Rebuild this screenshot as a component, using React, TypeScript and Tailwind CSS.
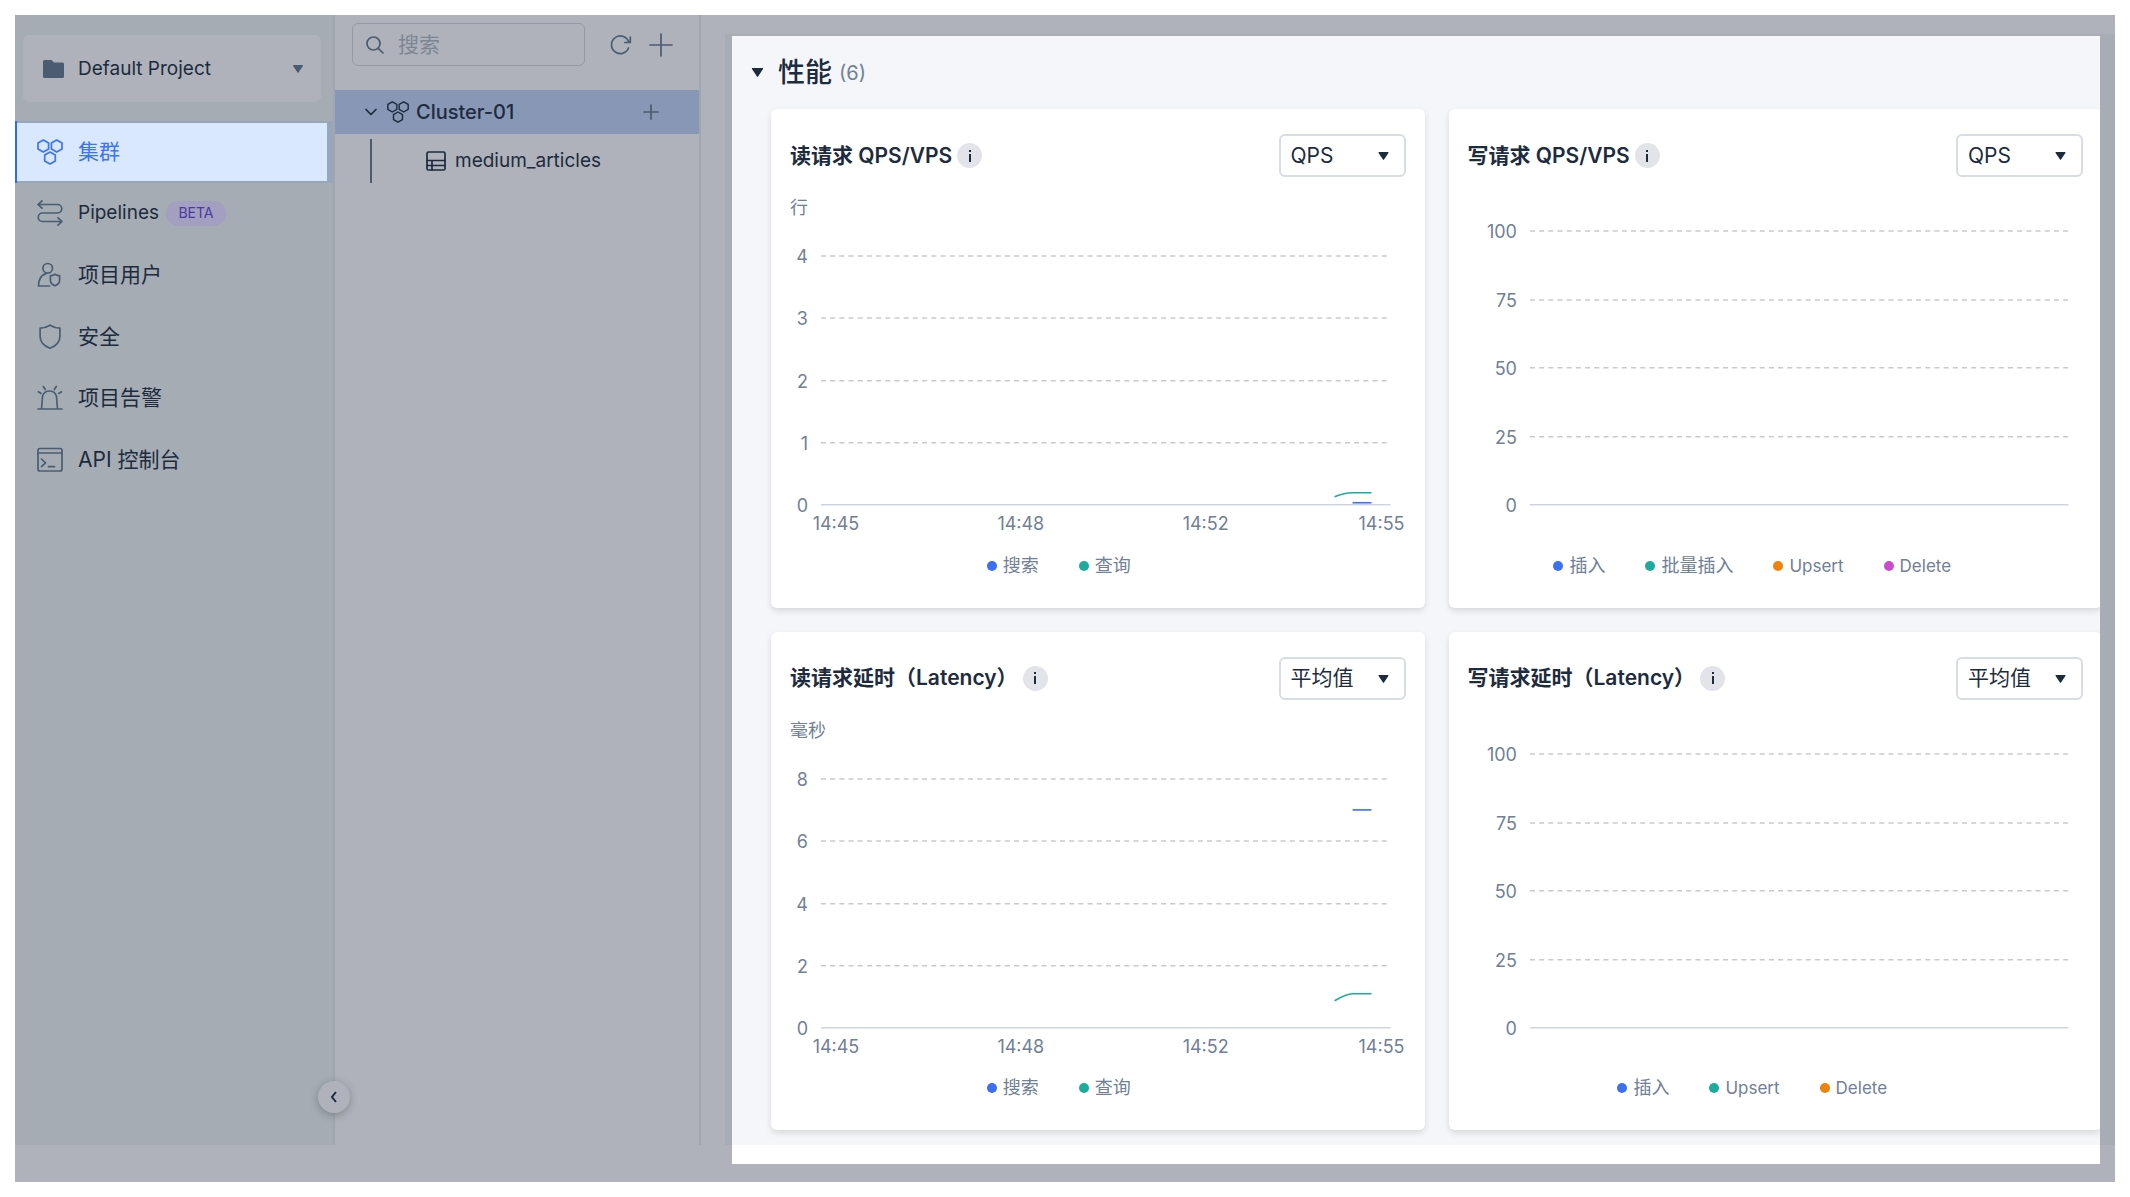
import type { ReactNode } from 'react';

type Series = { name: string; dot: string; stroke?: string; path?: string };

type Chart = {
    title: string;
    unit?: string;
    mode: string;
    ticks: string[];
    top: number;
    left: number;
    times?: string[];
    legend: string;
    series: Series[];
};

const charts: Chart[] = [
    {
        title: '读请求 QPS/VPS',
        unit: '行',
        mode: 'QPS',
        ticks: ['4', '3', '2', '1', '0'],
        top: 79,
        left: 50,
        times: ['14:45', '14:48', '14:52', '14:55'],
        legend: 'pr-[78px]',
        series: [
            { name: '搜索', dot: 'bg-[#3b6ff5]', stroke: '#3b6ff5', path: 'M582 326H601' },
            { name: '查询', dot: 'bg-[#1cac9c]', stroke: '#1cac9c', path: 'M564 320Q574 316 582 316H601' },
        ],
    },
    {
        title: '写请求 QPS/VPS',
        mode: 'QPS',
        ticks: ['100', '75', '50', '25', '0'],
        top: 54,
        left: 81,
        legend: 'pr-[46px]',
        series: [
            { name: '插入', dot: 'bg-[#3b6ff5]' },
            { name: '批量插入', dot: 'bg-[#1cac9c]' },
            { name: 'Upsert', dot: 'bg-[#f0820a]' },
            { name: 'Delete', dot: 'bg-[#cc4acc]' },
        ],
    },
    {
        title: '读请求延时（Latency）',
        unit: '毫秒',
        mode: '平均值',
        ticks: ['8', '6', '4', '2', '0'],
        top: 79,
        left: 50,
        times: ['14:45', '14:48', '14:52', '14:55'],
        legend: 'pr-[78px]',
        series: [
            { name: '搜索', dot: 'bg-[#3b6ff5]', stroke: '#3b6ff5', path: 'M582 110H601' },
            { name: '查询', dot: 'bg-[#1cac9c]', stroke: '#1cac9c', path: 'M564 301Q576 294 582 294H601' },
        ],
    },
    {
        title: '写请求延时（Latency）',
        mode: '平均值',
        ticks: ['100', '75', '50', '25', '0'],
        top: 54,
        left: 81,
        legend: 'pr-[46px]',
        series: [
            { name: '插入', dot: 'bg-[#3b6ff5]' },
            { name: 'Upsert', dot: 'bg-[#1cac9c]' },
            { name: 'Delete', dot: 'bg-[#f0820a]' },
        ],
    },
];

const timeX = [65, 250, 435, 611];
const BASELINE = 328;

const isLatin = (text: string) => /^[A-Za-z]+$/.test(text);

const Icon = ({ box, className, children }: { box: string; className: string; children: ReactNode }) => (
    <svg
        className={className}
        viewBox={box}
        fill="none"
        stroke="currentColor"
        strokeWidth="1.7"
        strokeLinecap="round"
        strokeLinejoin="round"
        aria-hidden="true"
    >
        {children}
    </svg>
);

const ClusterIcon = ({ className }: { className: string }) => (
    <Icon box="0 0 26 26" className={className}>
        <path d="M6.3 1l5.3 3.1v5.8L6.3 13 1 9.9V4.1zM19.7 1L25 4.1v5.8L19.7 13l-5.3-3.1V4.1zM13 13l5.3 3.1v5.8L13 25l-5.3-3.1v-5.8z" />
    </Icon>
);

const Caret = ({ className }: { className: string }) => (
    <svg className={className} viewBox="0 0 10 8" fill="currentColor" aria-hidden="true">
        <path d="M.6 0h8.8c.5 0 .7.5.5.9L5.5 7.6c-.2.4-.8.4-1 0L.1.9C-.1.5.1 0 .6 0z" />
    </svg>
);

const navItems: { label: string; beta?: boolean; icon: ReactNode }[] = [
    {
        label: 'Pipelines',
        beta: true,
        icon: <path d="M1 4.5h19.5a4.2 4.2 0 0 1 0 8.5H5.5a4.2 4.2 0 0 0 0 8.5H25M5 .8 1 4.5l4 3.7M21 17.8l4 3.7-4 3.7" />,
    },
    {
        label: '项目用户',
        icon: (
            <>
                <circle cx="10.7" cy="6.3" r="4.8" />
                <path d="M12.5 24H1.5C1.5 17.5 4 13 9 11.6M18 12.3c1.5 1 3 1.4 4.6 1.4v4.5c0 2.6-1.8 4.4-4.6 5.6-2.8-1.2-4.6-3-4.6-5.6v-4.5c1.6 0 3.1-.4 4.6-1.4z" />
            </>
        ),
    },
    {
        label: '安全',
        icon: <path d="M13 1.2c3 1.8 6 2.8 9.9 3v8.3c0 5.5-4.2 9.5-9.900 11.800-5.700-2.300-9.900-6.300-9.900-11.800V4.200c3.900-.2 6.900-1.200 9.900-3z" />,
    },
    {
        label: '项目告警',
        icon: <path d="M1 24h24M4.500 24l1-12.500a7.200 7.200 0 0 1 14 0l1 12.500M6.300 1.500l2 3M19.300 1.500l-2 3M1.300 6.800l2.800 1.600M24.500 6.800l-2.800 1.600" />,
    },
    {
        label: 'API 控制台',
        icon: (
            <>
                <rect x="1" y="1.5" width="24" height="22.5" rx="2" />
                <path d="M1 6h24M4.500 12l4 3.800-4 3.800M11.500 19.600h6" />
            </>
        ),
    },
];

const Sidebar = () => {
    return (
        <aside className="relative w-[320px] shrink-0 border-r-2 border-[#a0a6ae] bg-[#a5acb4] pt-5">
            <button className="mx-2 flex h-[67px] w-[298px] items-center rounded-md bg-[#afb2ba] pl-5 pr-[18px] text-left">
                <svg className="h-[18px] w-[21px] text-[#4b5c71]" viewBox="0 0 21 18" fill="currentColor" aria-hidden="true">
                    <path d="M1.5 0h7L11 2.500h8.500A1.500 1.500 0 0 1 21 4v12.500a1.500 1.500 0 0 1-1.500 1.500h-18A1.500 1.500 0 0 1 0 16.500v-15A1.500 1.500 0 0 1 1.500 0z" />
                </svg>
                <span className="ml-[14px] flex-1 text-[19px]">Default Project</span>
                <Caret className="h-2 w-[10px] text-[#4b5c71]" />
            </button>
            <nav className="mt-[19px]">
                <ul className="grid h-[370px] grid-rows-6">
                    <li className="border-l-2 border-[#2f6fe4] bg-[#96a6bd] py-[2px] pr-[6px]">
                        <a href="#clusters" className="flex h-full items-center bg-[#d9e8fe] pl-5 text-[#3b74f5]">
                            <ClusterIcon className="h-[26px] w-[26px]" />
                            <span className="ml-[15px]">集群</span>
                        </a>
                    </li>
                    {navItems.map((item) => (
                        <li key={item.label}>
                            <a href="#" className="flex h-full items-center pl-[22px]">
                                <Icon box="0 0 26 26" className="h-[26px] w-[26px] text-[#4b5c71]">
                                    {item.icon}
                                </Icon>
                                <span className={`ml-[15px] ${isLatin(item.label) ? 'text-[19px]' : ''}`}>{item.label}</span>
                                {item.beta && (
                                    <span className="ml-[7px] flex h-[25px] w-[60px] items-center justify-center rounded-full bg-[#a29fc0] text-[14px] text-[#4a3aa0]">
                                        BETA
                                    </span>
                                )}
                            </a>
                        </li>
                    ))}
                </ul>
            </nav>
            <button
                aria-label="Collapse menu"
                className="absolute -right-[17px] bottom-8 z-10 flex h-8 w-8 items-center justify-center rounded-full bg-[#afb2ba] shadow-[0_2px_8px_rgba(0,0,0,0.25)]"
            >
                <svg className="h-3 w-2" viewBox="0 0 8 12" fill="none" stroke="currentColor" strokeWidth="2" aria-hidden="true">
                    <path d="M6 1 2 6l4 5" />
                </svg>
            </button>
        </aside>
    );
};

const ClusterTree = () => {
    return (
        <section className="w-[366px] shrink-0 border-r-2 border-[#a0a6ae] pt-2">
            <div className="flex items-center pl-[17px] text-[#4b5c71]">
                <label className="flex h-[43px] w-[233px] items-center rounded-md border border-[#929aa6] pl-[13px]">
                    <Icon box="0 0 18 18" className="h-[18px] w-[18px]">
                        <circle cx="7.5" cy="7.5" r="6.5" />
                        <path d="M12.3 12.3 17 17" />
                    </Icon>
                    <input
                        type="text"
                        aria-label="搜索"
                        placeholder="搜索"
                        className="ml-[14px] w-[160px] bg-transparent outline-none placeholder:text-[#7b8694]"
                    />
                </label>
                <button aria-label="Refresh" className="ml-6">
                    <Icon box="0 0 24 22" className="h-[22px] w-6">
                        <path d="M19.8 8.5A8.800 8.800 0 1 0 19.500 14M21.300 3v5.500h-5.500" />
                    </Icon>
                </button>
                <button aria-label="Create cluster" className="ml-4">
                    <Icon box="0 0 24 24" className="h-6 w-6">
                        <path d="M12 1v22M1 12h22" />
                    </Icon>
                </button>
            </div>
            <div className="mt-6 flex h-11 items-center bg-[#8897b6] pl-[30px] pr-10 font-medium">
                <Icon box="0 0 12 8" className="h-2 w-3">
                    <path d="M1 1.5l5 5 5-5" />
                </Icon>
                <ClusterIcon className="ml-[10px] h-[22px] w-[22px]" />
                <span className="ml-[7px] flex-1 text-[20px]">Cluster-01</span>
                <button aria-label="Create collection" className="text-[#4b5c71]">
                    <Icon box="0 0 16 16" className="h-4 w-4">
                        <path d="M8 1v14M1 8h14" />
                    </Icon>
                </button>
            </div>
            <div className="ml-[35px] mt-[5px] flex h-11 items-center border-l-2 border-[#4f5b6b] pl-[54px]">
                <Icon box="0 0 20 20" className="h-5 w-5">
                    <rect x="1" y="1" width="18" height="18" rx="1.5" />
                    <path d="M1 9.5h18M1 14.5h18M6 9.5V19" />
                </Icon>
                <a href="#medium_articles" className="ml-[9px] text-[19px]">
                    medium_articles
                </a>
            </div>
        </section>
    );
};

const ChartCard = ({ chart }: { chart: Chart }) => {
    const step = (BASELINE - chart.top) / (chart.ticks.length - 1);
    return (
        <article className="rounded-md bg-white pb-7 pt-[25px] shadow-[0_3px_6px_rgba(0,0,0,0.12)]">
            <div className="flex h-[43px] items-center px-[19px]">
                <h3 className="font-semibold">{chart.title}</h3>
                <button
                    aria-label={`${chart.title} info`}
                    className="ml-[5px] flex h-[25px] w-[25px] items-center justify-center rounded-full bg-[#e2e4e9]"
                >
                    <svg className="h-3 w-1" viewBox="0 0 4 12" fill="currentColor" aria-hidden="true">
                        <path d="M1 0h2v2H1zM1 4h2v8H1z" />
                    </svg>
                </button>
                <div className="relative ml-auto">
                    <select
                        aria-label={chart.title}
                        className="h-[43px] w-[127px] appearance-none rounded-md border-2 border-[#d8dde4] bg-white pl-[10px]"
                    >
                        <option>{chart.mode}</option>
                    </select>
                    <Caret className="pointer-events-none absolute right-[17px] top-[18px] h-2 w-[11px]" />
                </div>
            </div>
            <svg className="w-full" viewBox="0 0 654 375" fontSize="18" fill="#708096">
                {chart.unit && <text x="19" y="37">{chart.unit}</text>}
                {chart.ticks.map((tick, i) => {
                    const y = Math.round(chart.top + i * step);
                    const last = i === chart.ticks.length - 1;
                    return (
                        <g key={tick}>
                            <text x={chart.left - 13} y={y + 7} textAnchor="end">{tick}</text>
                            <path
                                d={`M${chart.left} ${y}H620`}
                                stroke={last ? '#cfd5e0' : '#c8cacd'}
                                strokeWidth="1.5"
                                strokeDasharray={last ? undefined : '5 4.2'}
                            />
                        </g>
                    );
                })}
                {chart.times?.map((time, i) => (
                    <text key={time} x={timeX[i]} y="353" textAnchor="middle">{time}</text>
                ))}
                {chart.series.map((s) => s.path && (
                    <path key={s.name} d={s.path} fill="none" stroke={s.stroke} strokeWidth="1.6" />
                ))}
            </svg>
            <ul className={`flex h-7 items-center justify-center gap-10 text-[18px] text-[#708096] ${chart.legend}`}>
                {chart.series.map((s) => (
                    <li key={s.name} className="flex items-center gap-[6px]">
                        <span className={`h-[10px] w-[10px] rounded-full ${s.dot}`}></span>
                        <span className={isLatin(s.name) ? 'text-[17px]' : ''}>{s.name}</span>
                    </li>
                ))}
            </ul>
        </article>
    );
};

const App = () => {
    return (
        <div className="bg-white p-[15px] font-[Inter,'Noto_Sans_CJK_SC',sans-serif] text-[21px] leading-[28px] text-[#1d2b3e]">
            <div className="bg-[#afb2ba] pb-[18px]">
                <div className="flex">
                    <Sidebar />
                    <ClusterTree />
                    <main className="min-w-0 flex-1 pl-6 pt-[19px]">
                        <div className="bg-[#a8adb5] pl-[7px] pr-[15px] pt-[2px]">
                            <div className="overflow-hidden bg-[#f4f6fa] pb-[15px] pl-[39px]">
                                <h2 className="-ml-5 flex h-[73px] items-center">
                                    <Caret className="h-[9px] w-[13px]" />
                                    <span className="ml-[14px] text-[27px] font-medium">性能</span>
                                    <span className="ml-[7px] text-[20px] text-[#708096]">(6)</span>
                                </h2>
                                <div className="-mr-[2px] grid grid-cols-2 gap-6">
                                    {charts.map((chart) => (
                                        <ChartCard key={chart.title} chart={chart} />
                                    ))}
                                </div>
                            </div>
                        </div>
                    </main>
                </div>
                {/* Strip under the panels */}
                <div className="ml-[717px] mr-[15px] h-[19px] bg-white"></div>
            </div>
        </div>
    );
};

export default App;
